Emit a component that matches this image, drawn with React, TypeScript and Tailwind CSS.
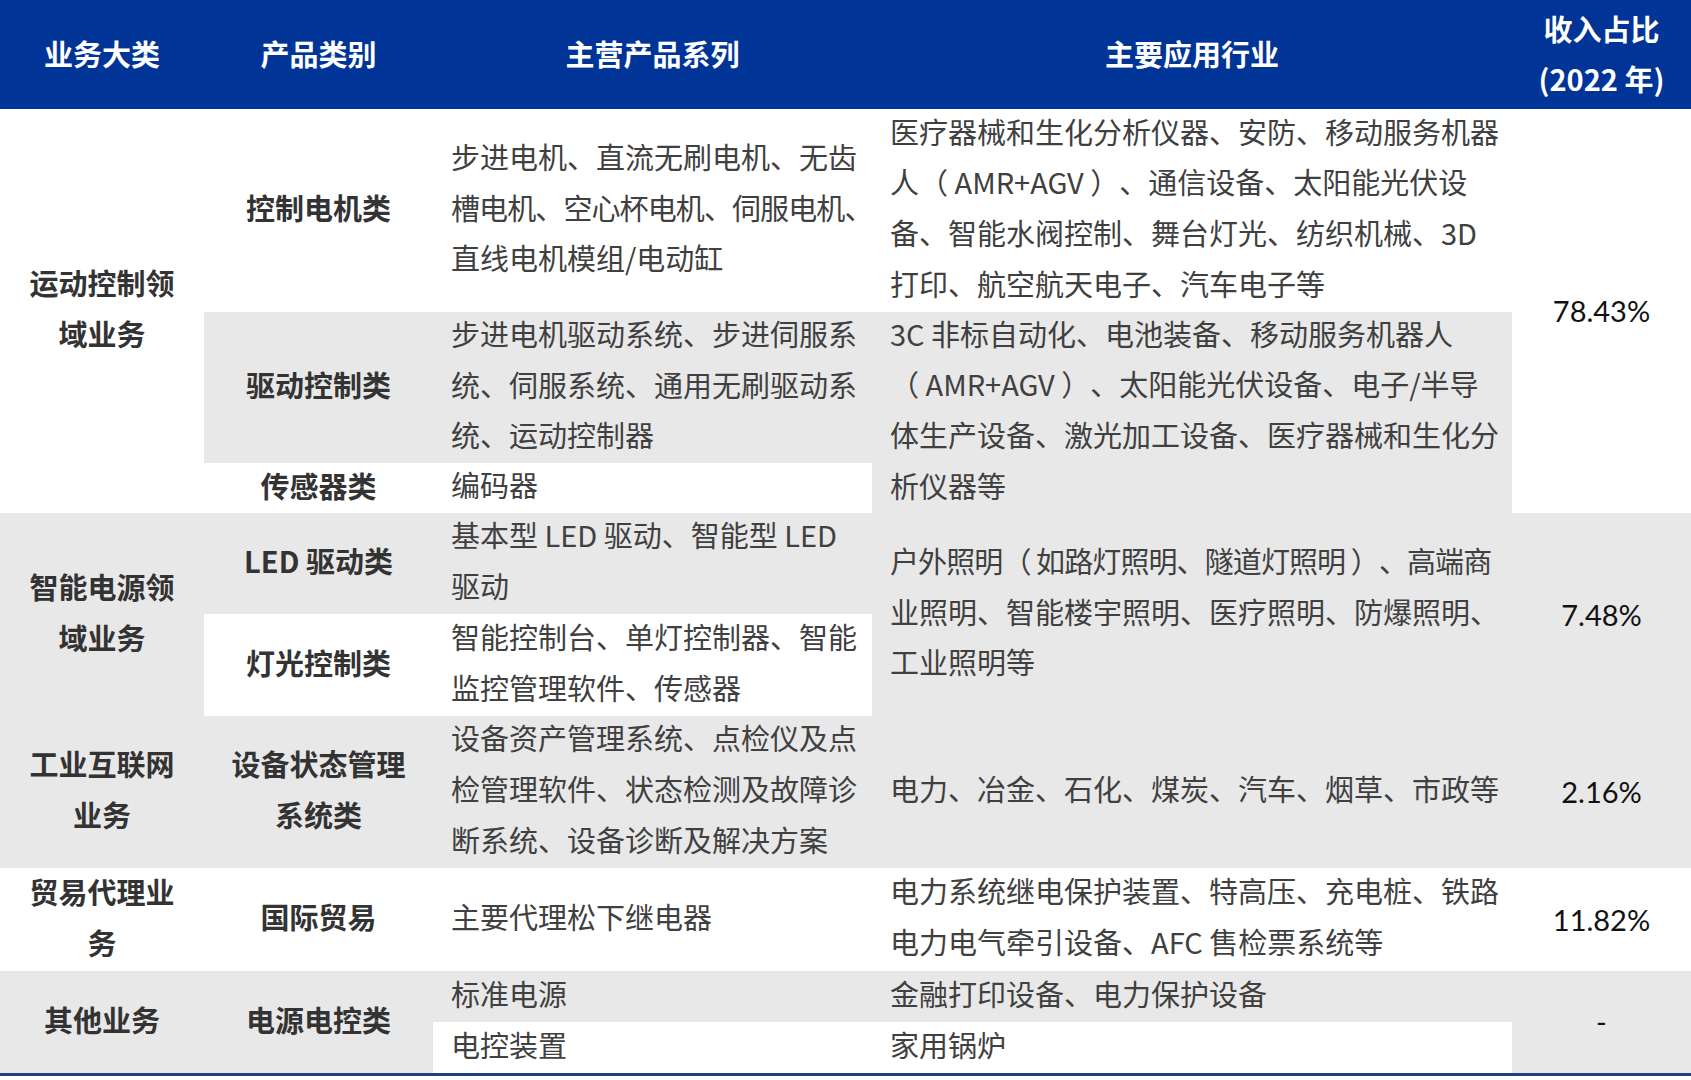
import React from "react";

const Paren = ({ s }: { s: string }) => {
  const parts = s.split(/([（）])/);
  return (
    <>
      {parts.map((p, i) =>
        p === "（" || p === "）" ? (
          <span key={i} className="font-['Noto_Sans_CJK_TC',sans-serif]">
            {p}
          </span>
        ) : (
          <React.Fragment key={i}>{p}</React.Fragment>
        )
      )}
    </>
  );
};

const Lines = ({ lines, tight }: { lines: string[]; tight?: number }) => (
  <>
    {lines.map((l, i) => (
      <div key={i} className={`whitespace-nowrap ${tight === i ? "tracking-[-0.9px]" : ""}`}>
        <Paren s={l} />
      </div>
    ))}
  </>
);

const H = "bg-[#013497] text-white font-bold flex flex-col items-center justify-center text-[29px] leading-[50px] pb-[3px]";
const B = "flex flex-col items-center justify-center font-bold text-[#333333] text-[29px] leading-[50.7px] text-center pb-[6px]";
const T = "flex flex-col justify-center pl-[18px] text-[#404040] text-[29px] leading-[50.7px] pb-[7px]";
const P = "flex items-center justify-center text-[#111111] text-[29px] font-['Lato','Noto_Sans_CJK_SC',sans-serif]";
const G = "bg-[#e8e8e8]";
const W = "bg-white";

export default function App() {
  return (
    <div className="w-[1691px] h-[1080px] bg-white font-['Noto_Sans_CJK_SC','Noto_Sans',sans-serif] overflow-hidden [text-spacing-trim:space-all]">
      <div className="grid grid-cols-[204px_229px_439px_640px_179px] grid-rows-[109px_203px_151px_50px_101px_102px_152px_103px_51px_51px] border-b-[3px] border-[#1d3f86]">
        {/* header */}
        <div className={`${H} col-start-1 row-start-1`}>业务大类</div>
        <div className={`${H} col-start-2 row-start-1`}>产品类别</div>
        <div className={`${H} col-start-3 row-start-1`}>主营产品系列</div>
        <div className={`${H} col-start-4 row-start-1`}>主要应用行业</div>
        <div className={`${H} col-start-5 row-start-1`}>
          <div>收入占比</div>
          <div>(2022 年)</div>
        </div>

        {/* group 1 */}
        <div className={`${B} ${W} col-start-1 row-start-2 row-span-3`}>
          <Lines lines={["运动控制领", "域业务"]} />
        </div>
        <div className={`${B} ${W} col-start-2 row-start-2`}>控制电机类</div>
        <div className={`${T} ${W} col-start-3 row-start-2`}>
          <Lines lines={["步进电机、直流无刷电机、无齿", "槽电机、空心杯电机、伺服电机、", "直线电机模组/电动缸"]} tight={1} />
        </div>
        <div className={`${T} ${W} col-start-4 row-start-2`}>
          <Lines
            lines={[
              "医疗器械和生化分析仪器、安防、移动服务机器",
              "人（ AMR+AGV ）、通信设备、太阳能光伏设",
              "备、智能水阀控制、舞台灯光、纺织机械、3D",
              "打印、航空航天电子、汽车电子等",
            ]}
          />
        </div>
        <div className={`${P} ${W} col-start-5 row-start-2 row-span-3`}>78.43%</div>

        <div className={`${B} ${G} col-start-2 row-start-3`}>驱动控制类</div>
        <div className={`${T} ${G} col-start-3 row-start-3`}>
          <Lines lines={["步进电机驱动系统、步进伺服系", "统、伺服系统、通用无刷驱动系", "统、运动控制器"]} />
        </div>
        <div className={`${T} ${G} col-start-4 row-start-3 row-span-2`}>
          <Lines
            lines={[
              "3C 非标自动化、电池装备、移动服务机器人",
              "（ AMR+AGV ）、太阳能光伏设备、电子/半导",
              "体生产设备、激光加工设备、医疗器械和生化分",
              "析仪器等",
            ]}
          />
        </div>

        <div className={`${B} ${W} col-start-2 row-start-4`}>传感器类</div>
        <div className={`${T} ${W} col-start-3 row-start-4`}>编码器</div>

        {/* group 2 */}
        <div className={`${B} ${G} col-start-1 row-start-5 row-span-2`}>
          <Lines lines={["智能电源领", "域业务"]} />
        </div>
        <div className={`${B} ${G} col-start-2 row-start-5`}>LED 驱动类</div>
        <div className={`${T} ${G} col-start-3 row-start-5`}>
          <Lines lines={["基本型 LED 驱动、智能型 LED", "驱动"]} />
        </div>
        <div className={`${T} ${G} col-start-4 row-start-5 row-span-2`}>
          <Lines
            lines={[
              "户外照明（ 如路灯照明、隧道灯照明 ）、高端商",
              "业照明、智能楼宇照明、医疗照明、防爆照明、",
              "工业照明等",
            ]}
            tight={0}
          />
        </div>
        <div className={`${P} ${G} col-start-5 row-start-5 row-span-2`}>7.48%</div>
        <div className={`${B} ${W} col-start-2 row-start-6`}>灯光控制类</div>
        <div className={`${T} ${W} col-start-3 row-start-6`}>
          <Lines lines={["智能控制台、单灯控制器、智能", "监控管理软件、传感器"]} />
        </div>

        {/* group 3 */}
        <div className={`${B} ${G} col-start-1 row-start-7`}>
          <Lines lines={["工业互联网", "业务"]} />
        </div>
        <div className={`${B} ${G} col-start-2 row-start-7`}>
          <Lines lines={["设备状态管理", "系统类"]} />
        </div>
        <div className={`${T} ${G} col-start-3 row-start-7`}>
          <Lines lines={["设备资产管理系统、点检仪及点", "检管理软件、状态检测及故障诊", "断系统、设备诊断及解决方案"]} />
        </div>
        <div className={`${T} ${G} col-start-4 row-start-7`}>电力、冶金、石化、煤炭、汽车、烟草、市政等</div>
        <div className={`${P} ${G} col-start-5 row-start-7`}>2.16%</div>

        {/* group 4 */}
        <div className={`${B} ${W} col-start-1 row-start-8`}>
          <Lines lines={["贸易代理业", "务"]} />
        </div>
        <div className={`${B} ${W} col-start-2 row-start-8`}>国际贸易</div>
        <div className={`${T} ${W} col-start-3 row-start-8`}>主要代理松下继电器</div>
        <div className={`${T} ${W} col-start-4 row-start-8`}>
          <Lines lines={["电力系统继电保护装置、特高压、充电桩、铁路", "电力电气牵引设备、AFC 售检票系统等"]} />
        </div>
        <div className={`${P} ${W} col-start-5 row-start-8`}>11.82%</div>

        {/* group 5 */}
        <div className={`${B} ${G} col-start-1 row-start-9 row-span-2`}>其他业务</div>
        <div className={`${B} ${G} col-start-2 row-start-9 row-span-2`}>电源电控类</div>
        <div className={`${T} ${G} col-start-3 row-start-9`}>标准电源</div>
        <div className={`${T} ${G} col-start-4 row-start-9`}>金融打印设备、电力保护设备</div>
        <div className={`${T} ${W} col-start-3 row-start-10`}>电控装置</div>
        <div className={`${T} ${W} col-start-4 row-start-10`}>家用锅炉</div>
        <div className={`${P} ${G} col-start-5 row-start-9 row-span-2`}>-</div>
      </div>
    </div>
  );
}
